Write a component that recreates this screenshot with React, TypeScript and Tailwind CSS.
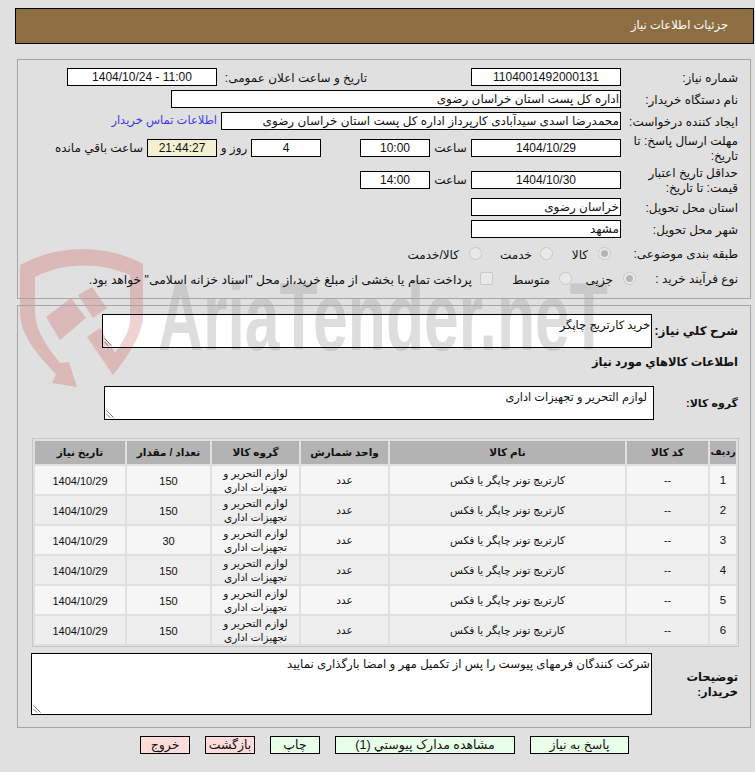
import React from 'react';

const FONT = "font-['Liberation_Sans','DejaVu_Sans','Noto_Sans',sans-serif]";

const Box = ({ className = '', children }: { className?: string; children?: React.ReactNode }) => (
  <div className={`h-[18px] border border-black bg-white text-[12px] leading-[16px] text-[#111] whitespace-nowrap overflow-hidden ${className}`}>
    {children}
  </div>
);

const Row = ({ label, h = 22, children }: { label: React.ReactNode; h?: number; children?: React.ReactNode }) => (
  <div className={`flex items-center ${h === 32 ? 'h-[32px]' : h === 26 ? 'h-[26px]' : h === 24 ? 'h-[24px]' : 'h-[22px]'}`}>
    <div className="w-[117px] shrink-0 pt-[2px] text-[12px] leading-[15px] text-[#111]">{label}</div>
    {children}
  </div>
);

const Radio = ({ on }: { on?: boolean }) => (
  <span className="w-[13px] h-[13px] rounded-full border border-[#c8c8c8] bg-[#e9e9e9] flex items-center justify-center shrink-0">
    {on && <span className="w-[7px] h-[7px] rounded-full bg-[#b5b5b5]" />}
  </span>
);

const Resize = () => (
  <svg className="absolute left-[1px] bottom-[1px]" width="9" height="9" viewBox="0 0 9 9">
    <path d="M0.5 1.5L7.5 8.5M0.5 5L4 8.5" stroke="#777" strokeWidth="1" />
  </svg>
);

// drawn twice: on the page and, lighter, inside the first white box
const Watermark = ({ red, gray, className }: { red: string; gray: string; className: string }) => (
  <svg dir="ltr" className={`absolute pointer-events-none ${className}`} width="755" height="400" viewBox="0 0 755 400">
    <path
      d="M20 265 C 58 244 106 244 143 264 L143 320 C 140 338 128 356 113 375 L87 337 L100 328 L115 353 C 124 340 130 330 130 320 L130 275 C 100 262 64 262 35 277 L35 313 C 36 332 48 348 60 363 L69 362 L77 387 L52 383 L56 374 C 34 352 20 332 20 313 Z"
      fill={red}
    />
    <path d="M46 317 L71 298 L86 318 L60 340 Z M78 295 L92 287 L107 308 L93 318 Z" fill={red} />
    <text x="158" y="350" direction="ltr" textLength="450" lengthAdjust="spacingAndGlyphs" fontFamily="'Liberation Sans', sans-serif" fontWeight="700" fontSize="96" fill={gray}>
      AriaTender.neT
    </text>
  </svg>
);

const rows = [150, 150, 30, 150, 150, 150];

const thClass = 'bg-[#b3b3b3] font-bold text-[10.5px] text-[#111] h-[23px] p-0 whitespace-nowrap';
const btnClass = 'h-[18px] border border-black text-[12.5px] leading-[16px] text-[#111]';

export default function App() {
  return (
    <div dir="rtl" className={`relative w-[755px] h-[772px] overflow-hidden bg-[#e0e0e0] ${FONT}`}>
      <Watermark red="#dcb9b9" gray="#c9c9c9" className="left-0 top-0" />
      <div className="relative pt-[8px]">
        {/* Title bar */}
        <div className="mr-[1px] ml-[15px] h-[36px] bg-[#8d6e42] border border-black text-white text-[11.5px] flex items-center pr-[25px]">
          جزئیات اطلاعات نیاز
        </div>

        {/* Main info */}
        <div className="mt-[15px] mr-[4px] ml-[17px] h-[240px] border border-[#a6a6a6] pt-[6px] pr-[12px]">
          <Row label="شماره نیاز:">
            <Box className="w-[150px] text-center">1104001492000131</Box>
            <div className="w-[254px] shrink-0 pt-[2px] text-[12px] text-[#111] pr-[104px] whitespace-nowrap">تاریخ و ساعت اعلان عمومی:</div>
            <Box className="w-[150px] text-center"><span dir="ltr">1404/10/24 - 11:00</span></Box>
          </Row>
          <Row label="نام دستگاه خریدار:">
            <Box className="w-[450px] pr-[1px]">اداره کل پست استان خراسان رضوی</Box>
          </Row>
          <Row label="ایجاد کننده درخواست:">
            <Box className="w-[400px] pr-[1px]">محمدرضا اسدی سیدآبادی کارپرداز اداره کل پست استان خراسان رضوی</Box>
            <a className="mr-[4px] text-[11.5px] text-[#3a3af0] whitespace-nowrap">اطلاعات تماس خریدار</a>
          </Row>
          <Row h={32} label="مهلت ارسال پاسخ: تا تاریخ:">
            <Box className="w-[150px] text-center">1404/10/29</Box>
            <span className="w-[41px] text-center text-[12px] text-[#111]">ساعت</span>
            <Box className="w-[70px] text-center">10:00</Box>
            <span className="w-[39px]" />
            <Box className="w-[70px] text-center">4</Box>
            <span className="w-[34px] text-center text-[12px] text-[#111] whitespace-nowrap">روز و</span>
            <Box className="w-[70px] text-center !bg-[#f2f0d0] border-[#555]">21:44:27</Box>
            <span className="mr-[4px] text-[12px] text-[#111] whitespace-nowrap">ساعت باقي مانده</span>
          </Row>
          <Row h={32} label="حداقل تاریخ اعتبار قیمت: تا تاریخ:">
            <Box className="w-[150px] text-center">1404/10/30</Box>
            <span className="w-[41px] text-center text-[12px] text-[#111]">ساعت</span>
            <Box className="w-[70px] text-center">14:00</Box>
          </Row>
          <Row label="استان محل تحویل:">
            <Box className="w-[150px] pr-[1px]">خراسان رضوی</Box>
          </Row>
          <Row label="شهر محل تحویل:">
            <Box className="w-[150px] pr-[1px]">مشهد</Box>
          </Row>
          <Row h={26} label="طبقه بندی موضوعی:">
            <div className="flex items-center text-[12px] text-[#111] mr-[10px]">
              <Radio on />
              <span className="w-[45px] pr-[10px] pt-[4px]">کالا</span>
              <Radio />
              <span className="w-[58px] pr-[8px] pt-[4px]">خدمت</span>
              <Radio />
              <span className="pr-[10px] pt-[4px]">کالا/خدمت</span>
            </div>
          </Row>
          <Row h={24} label="نوع فرآیند خرید :">
            <div className="flex items-center text-[12px] text-[#111] whitespace-nowrap mr-[-15px]">
              <Radio on />
              <span className="w-[51px] pr-[10px] pt-[4px]">جزیی</span>
              <Radio />
              <span className="w-[66px] pr-[9px] pt-[4px]">متوسط</span>
              <span className="w-[13px] h-[13px] border border-[#c8c8c8] bg-[#e9e9e9] rounded-[2px] shrink-0" />
              <span className="pr-[8px] pt-[4px] text-[12.3px]">پرداخت تمام یا بخشی از مبلغ خرید،از محل "اسناد خزانه اسلامی" خواهد بود.</span>
            </div>
          </Row>
        </div>

        {/* Items */}
        <div className="mt-[6px] mr-[4px] ml-[17px] h-[423px] border border-[#a6a6a6] pr-[12px] pt-[8px]">
          <div className="flex items-center h-[34px]">
            <div className="w-[86px] shrink-0 font-bold text-[12px] text-[#111] whitespace-nowrap">شرح کلي نیاز:</div>
            <div className="relative w-[550px] h-[34px] border border-black bg-white overflow-hidden">
              <Watermark red="#f0d2d2" gray="#dddddd" className="left-[-103px] top-[-315px]" />
              <div className="relative text-[11.5px] text-[#111] pr-[1px] leading-[20px]">خرید کارتریج چاپگر</div>
              <Resize />
            </div>
          </div>
          <div className="mt-[6px] h-[16px] font-bold text-[11.5px] text-[#111] leading-[16px]">اطلاعات کالاهاي مورد نیاز</div>
          <div className="flex items-center h-[34px] mt-[16px]">
            <div className="w-[84px] shrink-0 font-bold text-[11px] text-[#111]">گروه کالا:</div>
            <div className="relative w-[550px] h-[34px] border border-black bg-white text-[11.4px] text-[#111] pr-[6px] leading-[20px]">
              لوازم التحریر و تجهیزات اداری
              <Resize />
            </div>
          </div>

          <div className="mt-[18px] w-[707px] mr-[-1px] border border-[#c6c6c6]">
            <table className="w-[705px] table-fixed border-separate border-spacing-[2px] text-[10.5px] text-[#111] text-center">
              <colgroup>
                <col className="w-[26px]" />
                <col className="w-[81px]" />
                <col className="w-[235px]" />
                <col className="w-[87px]" />
                <col className="w-[87px]" />
                <col className="w-[83px]" />
                <col />
              </colgroup>
              <thead>
                <tr>
                  <th className={`${thClass} !text-[9.5px]`}>ردیف</th>
                  <th className={thClass}>کد کالا</th>
                  <th className={thClass}>نام کالا</th>
                  <th className={thClass}>واحد شمارش</th>
                  <th className={thClass}>گروه کالا</th>
                  <th className={thClass}>تعداد / مقدار</th>
                  <th className={thClass}>تاریخ نیاز</th>
                </tr>
              </thead>
              <tbody>
                {rows.map((qty, i) => (
                  <tr key={i} className={i % 2 === 0 ? 'bg-[#f6f6f6]' : 'bg-[#eeeeee]'}>
                    <td className="h-[28px] p-0 pt-[2px] text-[11.5px]">{i + 1}</td>
                    <td className="p-0 pt-[2px]">--</td>
                    <td className="p-0 pt-[2px]">کارتریج تونر چاپگر یا فکس</td>
                    <td className="p-0 pt-[2px]">عدد</td>
                    <td className="p-0 leading-[14px]">لوازم التحریر و<br />تجهیزات اداری</td>
                    <td className="p-0 pt-[2px] text-[11px]">{qty}</td>
                    <td className="p-0 pt-[2px] text-[11px]">1404/10/29</td>
                  </tr>
                ))}
              </tbody>
            </table>
          </div>

          <div className="flex items-center mt-[6px] h-[62px]">
            <div className="w-[86px] shrink-0 font-bold text-[11.5px] leading-[15px] text-[#111] pt-[2px]">توضیحات خریدار:</div>
            <div className="relative w-[621px] h-[62px] border border-black bg-white text-[11.8px] text-[#111] pr-[1px] leading-[20px]">
              شرکت کنندگان فرمهای پیوست را پس از تکمیل مهر و امضا بارگذاری نمایید
              <Resize />
            </div>
          </div>
        </div>

        {/* Actions */}
        <div className="mt-[8px] flex gap-[15px] pr-[126px]">
          <button className={`w-[99px] bg-[#e8ffe8] ${btnClass}`}>پاسخ به نیاز</button>
          <button className={`w-[180px] bg-[#e8ffe8] ${btnClass}`}>مشاهده مدارک پیوستي (1)</button>
          <button className={`w-[50px] bg-[#e8ffe8] ${btnClass}`}>چاپ</button>
          <button className={`w-[50px] bg-[#ffdcdc] ${btnClass}`}>بازگشت</button>
          <button className={`w-[50px] bg-[#ffdcdc] ${btnClass}`}>خروج</button>
        </div>
      </div>
    </div>
  );
}
